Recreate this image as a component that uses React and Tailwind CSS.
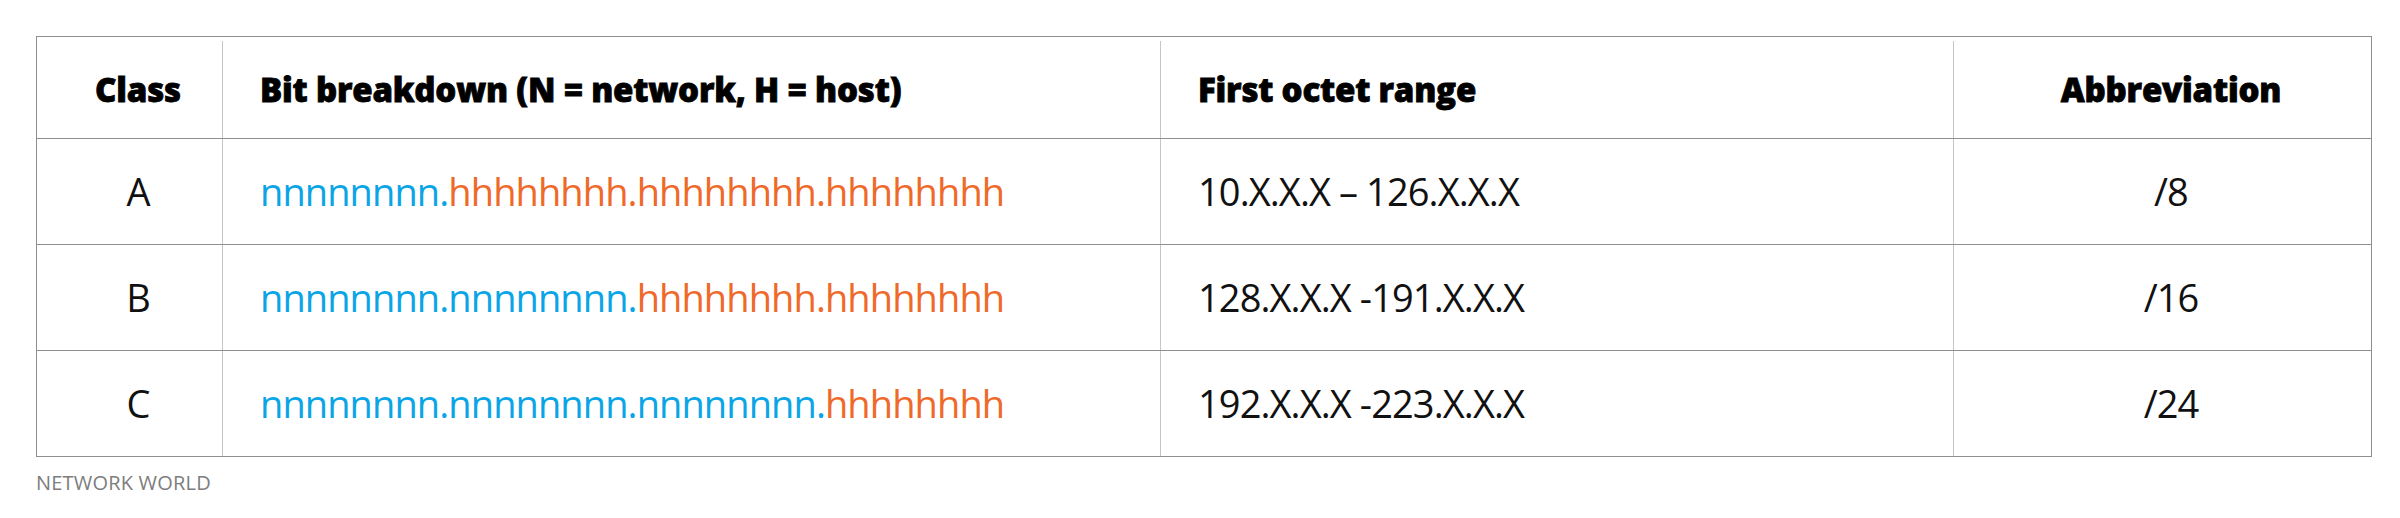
import React from 'react';

const BLUE = 'text-[#0aa5e6]';
const ORANGE = 'text-[#ef6a2a]';

const rows = [
  { cls: 'A', net: 'nnnnnnnn.', host: 'hhhhhhhh.hhhhhhhh.hhhhhhhh', range: '10.X.X.X – 126.X.X.X', abbr: '/8' },
  { cls: 'B', net: 'nnnnnnnn.nnnnnnnn.', host: 'hhhhhhhh.hhhhhhhh', range: '128.X.X.X -191.X.X.X', abbr: '/16' },
  { cls: 'C', net: 'nnnnnnnn.nnnnnnnn.nnnnnnnn.', host: 'hhhhhhhh', range: '192.X.X.X -223.X.X.X', abbr: '/24' },
];

const cell = 'flex items-center pl-[37px] pr-[20px]';
const vline = 'border-l border-[#c6c6c6]';

const Row = ({ className, children }) => (
  <div className={`grid grid-cols-[185px_938px_793px_1fr] border-b border-[#8f8f8f] ${className}`}>
    {children}
  </div>
);

export default function App() {
  return (
    <div className="bg-white w-[2400px] h-[518px] pt-[36px] pl-[36px] pr-[28px] font-['Open_Sans',sans-serif]">
      <div className="border-t border-x border-[#8f8f8f]">
        <Row className="h-[102px] pt-[4px] text-[33px] font-extrabold text-black tracking-[-0.2px] [-webkit-text-stroke:0.8px_black]">
          <div className={`${cell} justify-center`}>Class</div>
          <div className={`${cell} ${vline}`}>Bit breakdown (N = network, H = host)</div>
          <div className={`${cell} ${vline}`}>First octet range</div>
          <div className={`${cell} ${vline} justify-center`}>Abbreviation</div>
        </Row>
        {rows.map((r) => (
          <Row key={r.cls} className="h-[106px] text-[38px] font-medium tracking-[-0.9px] text-[#111]">
            <div className={`${cell} justify-center`}>{r.cls}</div>
            <div className={`${cell} ${vline}`}>
              <span className={BLUE}>{r.net}</span>
              <span className={ORANGE}>{r.host}</span>
            </div>
            <div className={`${cell} ${vline}`}>{r.range}</div>
            <div className={`${cell} ${vline} justify-center`}>{r.abbr}</div>
          </Row>
        ))}
      </div>
      <div className="pt-[16px] text-[20px] leading-none text-[#7d7d7d] tracking-[0.2px]">NETWORK WORLD</div>
    </div>
  );
}
